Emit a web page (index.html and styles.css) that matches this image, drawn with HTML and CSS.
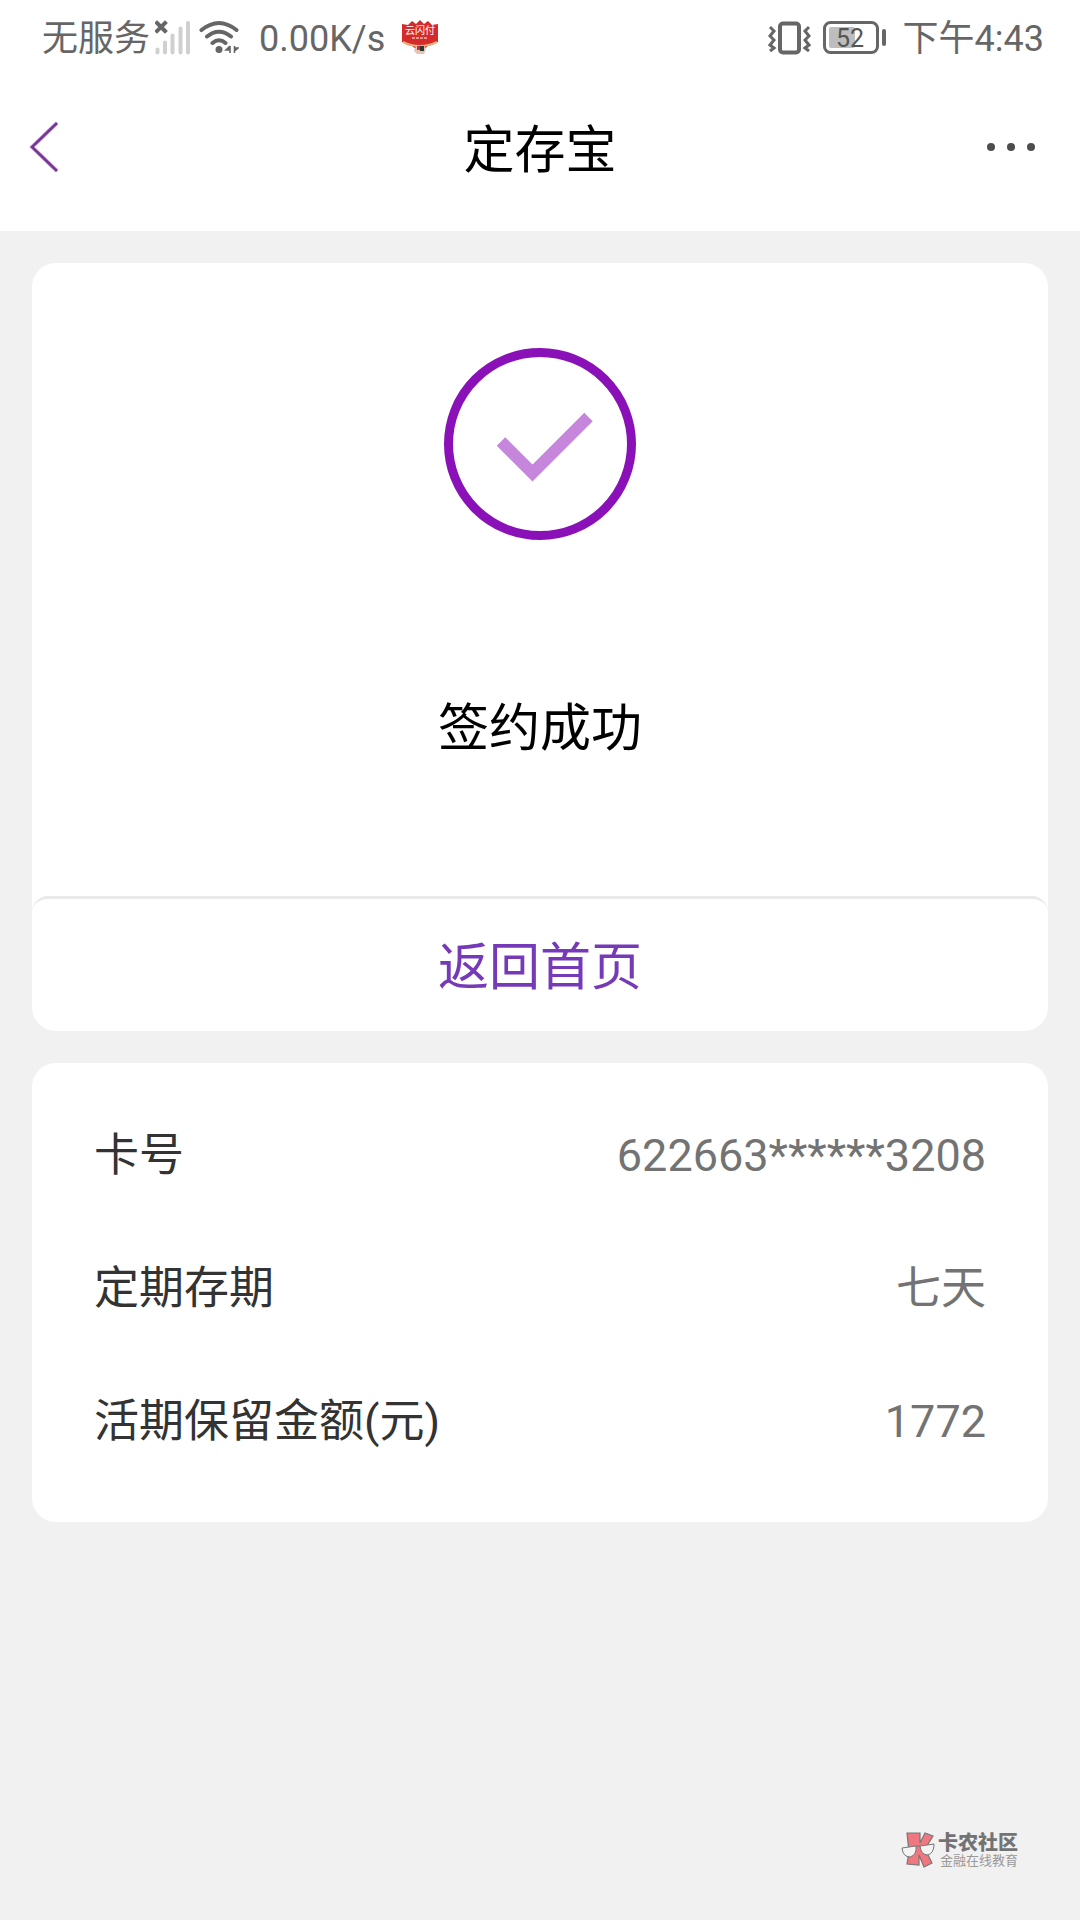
FILE: index.html
```html
<!DOCTYPE html>
<html lang="zh-CN">
<head>
<meta charset="utf-8">
<meta name="viewport" content="width=device-width, initial-scale=1">
<title>定存宝</title>
<link rel="stylesheet" href="styles.css">
</head>
<body>
<div class="status">
  <div class="status-group">
    <span class="status-text">无服务</span>
    <svg class="signal" width="36" height="36" viewBox="0 0 36 36" aria-hidden="true">
      <g stroke="#d0d0d0" stroke-width="4" stroke-linecap="round"><path d="M2.500 29.500v3M10 22.500v10M17.500 15.500v17M25.500 8.500v24M33 3v29.500"/></g>
      <path d="M2 3l8 8M10 3l-8 8" stroke="#666" stroke-width="4" stroke-linecap="square"/>
    </svg>
    <svg class="wifi" width="40" height="36" viewBox="0 0 40 36" aria-hidden="true">
      <g fill="none" stroke="#666" stroke-width="4" stroke-linecap="round"><path d="M2.500 10Q20-4 37.500 10M8 16.500Q20 7 32 16.500M13.500 23Q20 17.500 26.500 23"/></g>
      <circle cx="20" cy="29.500" r="3.500" fill="#666"/>
      <path d="M31 26v7M31 26l-4 4h4M35.500 26v7M35.500 31l3.500-3h-3.500" fill="#666" stroke="#666" stroke-width="1.600"/>
    </svg>
    <span class="status-text">0.00K/s</span>
    <svg class="promo" width="38" height="36" viewBox="0 0 38 36" aria-label="云闪付">
      <path d="M1 4l6 1 4-4 4 3 4-4 4 4 4-3 4 4 6-1v18q-8 4-10 4l-4 3h-8l-4-3Q5 25 1 22z" fill="#d62b2b"/>
      <path d="M2 22q8 4 17 4t17-4" fill="none" stroke="#e7b27a" stroke-width="2"/>
      <path d="M15 26l-2 5 3 3h7l2-5-2-3z" fill="#e5c3b0"/>
      <path d="M16 26h3v4h-3z" fill="#d62b2b"/>
      <path d="M19 26h4v5h-4z" fill="#273b34"/>
      <text x="19" y="14" class="promo-text">云闪付</text>
      <path d="M11 18h16" stroke="#f3b9a8" stroke-width="1.500" stroke-dasharray="3 1"/>
    </svg>
  </div>
  <div class="status-group">
    <svg class="vibrate" width="43" height="36" viewBox="0 0 43 36" fill="none" stroke="#666" aria-hidden="true">
      <rect x="12" y="3.500" width="19" height="29" rx="3" stroke-width="4"/>
      <path d="M2 7l4 4-4 5 4 4-4 5 4 3-4 3M41 7l-4 4 4 5-4 4 4 5-4 3 4 3" stroke-width="3"/>
    </svg>
    <svg class="battery" width="64" height="36" viewBox="0 0 64 36" aria-label="52%">
      <rect x="1.500" y="2.500" width="53" height="30" rx="6" fill="none" stroke="#666" stroke-width="3"/>
      <rect x="6" y="7" width="26" height="21" rx="2" fill="#bdbdbd"/>
      <path d="M61 11v13" stroke="#666" stroke-width="4" stroke-linecap="round"/>
      <text x="27" y="27" class="battery-text">52</text>
    </svg>
    <span class="status-text">下午4:43</span>
  </div>
</div>
<header class="nav">
  <button class="nav-button" type="button" aria-label="返回">
    <svg width="32" height="52" viewBox="0 0 32 52" fill="none"><path d="M29 2L4 26l25 24" stroke="#d9a6ee" stroke-width="4"/><path d="M29 2L4 26l25 24" stroke="#74398a" stroke-width="2.500"/></svg>
  </button>
  <h1 class="title">定存宝</h1>
  <button class="nav-button nav-more" type="button" aria-label="更多">
    <svg width="50" height="10" viewBox="0 0 50 10" fill="#4d4d4d"><circle cx="5" cy="5" r="4"/><circle cx="25" cy="5" r="4"/><circle cx="45" cy="5" r="4"/></svg>
  </button>
</header>
<main class="content">
  <section class="card">
    <div class="result">
      <svg width="192" height="192" viewBox="0 0 192 192" fill="none" aria-hidden="true">
        <circle cx="96" cy="96" r="91.500" stroke="#8a10b8" stroke-width="9"/>
        <path d="M57 93.500l31.500 31.500 56-56" stroke="#c586dc" stroke-width="12"/>
      </svg>
      <p class="message">签约成功</p>
    </div>
    <a class="home" href="#">返回首页</a>
  </section>
  <dl class="card details">
    <div class="row"><dt>卡号</dt><dd>622663******3208</dd></div>
    <div class="row"><dt>定期存期</dt><dd>七天</dd></div>
    <div class="row"><dt>活期保留金额(元)</dt><dd>1772</dd></div>
  </dl>
</main>
<footer class="brand">
  <svg width="34" height="36" viewBox="0 0 34 36" aria-hidden="true">
    <path d="M6 1h13v10l5-10 8 3-8 13 7 14-8 4-5-12v10L6 32l2-12z" fill="#f07680" stroke="#777" stroke-width="1.200"/>
    <path d="M1 16l14-2q1 9-6 11-7 0-8-9zM19 14l14-2q0 9-6 11-7 0-8-9z" fill="#f4f4f4" stroke="#777"/>
    <path d="M15 15q2-2 4-1" fill="none" stroke="#777"/>
  </svg>
  <div>
    <p class="brand-name">卡农社区</p>
    <p class="brand-note">金融在线教育</p>
  </div>
</footer>
</body>
</html>
```
FILE: styles.css
```css
* {
  box-sizing: border-box;
}

body {
  margin: 0;
  min-height: 100vh;
  display: flex;
  flex-direction: column;
  background: #f1f1f1;
  color: #000;
  font-family: Roboto, "Noto Sans CJK SC", sans-serif;
}

h1, p, dl, dd {
  margin: 0;
  font-weight: 400;
}

svg {
  display: block;
  flex: none;
}

.status {
  display: flex;
  justify-content: space-between;
  padding: 12px 36px 8px 42px;
  background: #fff;
  color: #666;
  font-size: 36px;
  line-height: 50px;
}

.status-group {
  display: flex;
  align-items: center;
}

.status-text {
  padding-top: 2px;
}

.signal {
  margin-left: 5px;
}

.wifi {
  margin: 0 20px 0 8px;
}

.promo {
  margin-left: 16px;
}

.promo-text {
  font-size: 10px;
  fill: #fff;
  text-anchor: middle;
}

.battery {
  margin: 0 16px 0 12px;
}

.battery-text {
  font-size: 25px;
  fill: #555;
  text-anchor: middle;
}

.nav {
  display: grid;
  grid-template-columns: 1fr auto 1fr;
  align-items: center;
  padding: 0 44px 9px 28px;
  min-height: 159px;
  background: #fff;
}

.nav-button {
  padding: 0;
  border: 0;
  background: none;
  justify-self: start;
}

.nav-more {
  justify-self: end;
}

.title {
  padding: 8px 0 0 16px;
  font-size: 51px;
  line-height: 72px;
}

.content {
  display: grid;
  gap: 32px;
  padding: 32px;
}

.card {
  border-radius: 24px;
  background: #fff;
}

.result {
  display: flex;
  flex-direction: column;
  align-items: center;
  gap: 153px;
  padding: 85px 32px 131px;
}

.message,
.home {
  font-size: 51px;
  line-height: 72px;
}

.home {
  display: block;
  padding: 33px 0 27px;
  border-top: 3px solid #e9e9e9;
  border-radius: 16px 16px 24px 24px;
  color: #763ab9;
  text-align: center;
  text-decoration: none;
}

.details {
  display: grid;
  gap: 69px;
  padding: 61px 62px 68px;
  font-size: 45px;
  line-height: 64px;
}

.row {
  display: flex;
  justify-content: space-between;
  color: #333;
}

.row dd {
  color: #737373;
}

.brand {
  display: flex;
  gap: 3px;
  justify-content: flex-end;
  align-items: center;
  margin-top: auto;
  padding: 0 62px 52px;
}

.brand-name {
  color: #737373;
  font-size: 20px;
  font-weight: 900;
  line-height: 22px;
}

.brand-note {
  color: #999;
  font-size: 13px;
  line-height: 14px;
  text-align: right;
}
```
